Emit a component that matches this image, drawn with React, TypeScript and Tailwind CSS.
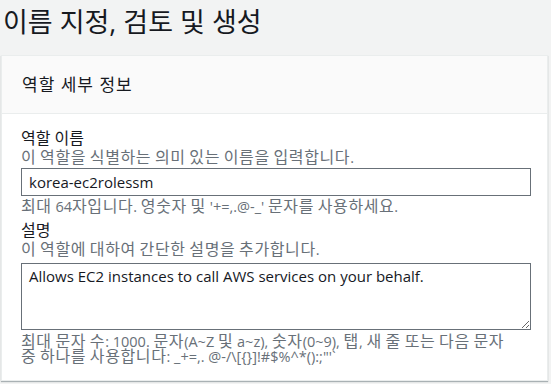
const font = "font-['Open_Sans','Noto_Sans_CJK_KR',sans-serif]";

// Hangul runs are slightly spaced out, everything else is a bit smaller
function Hint({ text, className = "" }: { text: string; className?: string }) {
  const parts = text.split(/([\uAC00-\uD7A3]+)/).filter((p) => p !== "");
  return (
    <div className={`text-[#687078] overflow-visible ${className}`}>
      {parts.map((p, i) =>
        /[\uAC00-\uD7A3]/.test(p) ? (
          <span key={i} className="text-[16px] tracking-[0.6px]">{p}</span>
        ) : (
          <span key={i} className="text-[14.5px]">{p}</span>
        )
      )}
    </div>
  );
}

export default function App() {
  return (
    <div className={`${font} w-[551px] h-[384px] bg-[#f2f3f3] overflow-hidden text-[#16191f]`}>
      <h1 className="h-[55px] pl-[3px] pt-[4px] text-[27px] leading-[36px] font-normal">이름 지정, 검토 및 생성</h1>

      <div className="ml-[1px] w-[547px] h-[326px] bg-white border border-[#eaeded] shadow-[0_1px_1px_0_rgba(0,28,36,0.3)]">
        <div className="h-[58px] bg-[#fafafa] border-b border-[#eaeded] px-[20px] flex items-center text-[17px] tracking-[1px]">
          역할 세부 정보
        </div>

        <div className="px-[19px] pt-[15px]">
          <div className="text-[16px] leading-[19px]">역할 이름</div>
          <Hint className="h-[18px] leading-[18px]" text="이 역할을 식별하는 의미 있는 이름을 입력합니다." />
          <input
            readOnly
            value="korea-ec2rolessm"
            className="mt-[2px] w-[510px] h-[28px] border border-[#687078] px-[7px] text-[15px] text-[#16191f] outline-none"
          />
          <Hint className="mt-[1px] h-[18px] leading-[18px]" text="최대 64자입니다. 영숫자 및 '+=,.@-_' 문자를 사용하세요." />

          <div className="mt-[6px] text-[16px] leading-[19px]">설명</div>
          <Hint className="h-[18px] leading-[18px]" text="이 역할에 대하여 간단한 설명을 추가합니다." />
          <textarea
            readOnly
            value="Allows EC2 instances to call AWS services on your behalf."
            className="mt-[5px] block w-[510px] h-[67px] border border-[#687078] px-[7px] py-[1px] text-[15px] leading-[22px] text-[#16191f] outline-none resize-y"
          />
          <Hint
            className="mt-[4px] h-[30px] leading-[15px] whitespace-pre"
            text={"최대 문자 수: 1000. 문자(A~Z 및 a~z), 숫자(0~9), 탭, 새 줄 또는 다음 문자\n중 하나를 사용합니다: _+=,. @-/\\[{}]!#$%^*():;\"'`"}
          />
        </div>
      </div>
    </div>
  );
}
